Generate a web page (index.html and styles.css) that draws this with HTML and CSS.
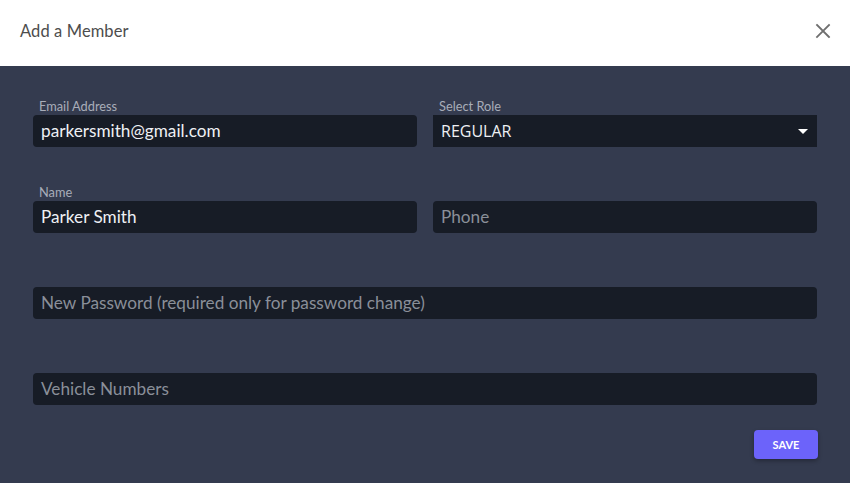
FILE: index.html
```html
<!DOCTYPE html>
<html>
<head>
<meta charset="utf-8">
<link rel="stylesheet" href="styles.css">
</head>
<body>
<div class="modal">
  <header class="modal-header">
    <h1 class="title">Add a Member</h1>
    <button class="close" aria-label="Close">
      <svg width="16" height="16" viewBox="0 0 16 16"><path d="M2 2L14 14M14 2L2 14" stroke="#6f6f6f" stroke-width="1.8" stroke-linecap="square"/></svg>
    </button>
  </header>
  <main class="modal-body">
    <div class="grid">
      <div class="field">
        <label class="label">Email Address</label>
        <div class="input">parkersmith@gmail.com</div>
      </div>
      <div class="field">
        <label class="label">Select Role</label>
        <div class="input select"><span class="select-text">REGULAR</span><span class="caret"></span></div>
      </div>
      <div class="field">
        <label class="label">Name</label>
        <div class="input">Parker Smith</div>
      </div>
      <div class="field">
        <label class="label"></label>
        <div class="input placeholder">Phone</div>
      </div>
      <div class="field full">
        <label class="label"></label>
        <div class="input placeholder">New Password (required only for password change)</div>
      </div>
      <div class="field full">
        <label class="label"></label>
        <div class="input placeholder">Vehicle Numbers</div>
      </div>
    </div>
    <div class="actions">
      <button class="save">SAVE</button>
    </div>
  </main>
</div>
</body>
</html>
```

FILE: styles.css
```css
* { box-sizing: border-box; }
html, body { margin: 0; padding: 0; }
body {
  width: 850px;
  height: 483px;
  overflow: hidden;
  font-family: "Lato", "Noto Sans", sans-serif;
  background: #343b4f;
}
.modal { display: flex; flex-direction: column; height: 483px; }
.modal-header {
  height: 66px;
  background: #ffffff;
  display: flex;
  align-items: center;
  justify-content: space-between;
  padding: 0 19px 4px 20px;
}
.title {
  margin: 0;
  font-size: 16.5px;
  font-weight: 400;
  color: #4d4d4d;
  letter-spacing: 0.1px;
}
.close {
  border: 0;
  background: transparent;
  padding: 0;
  width: 16px;
  height: 16px;
  display: flex;
}
.modal-body {
  flex: 1;
  background: #343b4f;
  padding: 34px 33px 0 33px;
}
.grid {
  display: grid;
  grid-template-columns: 384px 384px;
  column-gap: 16px;
  row-gap: 39px;
}
.field { display: flex; flex-direction: column; }
.full { grid-column: 1 / span 2; }
.label {
  height: 15px;
  font-size: 12.8px;
  line-height: 13px;
  color: #a8adb9;
  padding-left: 6px;
}
.input {
  height: 32px;
  background: #171c26;
  border-radius: 4px;
  color: #eef0f4;
  font-size: 17.2px;
  line-height: 32px;
  padding: 0 8px;
}
.placeholder { color: #8a8f99; }
.select {
  border-radius: 0;
  display: flex;
  align-items: center;
  justify-content: space-between;
  font-family: "Open Sans", "Noto Sans", sans-serif;
  font-size: 16px;
  padding-right: 9px;
}
.caret {
  width: 0; height: 0;
  border-left: 5px solid transparent;
  border-right: 5px solid transparent;
  border-top: 5px solid #ffffff;
}
.actions {
  display: flex;
  justify-content: flex-end;
  margin-top: 25px;
}
.save {
  width: 64px;
  height: 29px;
  border: 0;
  border-radius: 4px;
  background: #6c63fa;
  color: #ffffff;
  font-family: "Lato", sans-serif;
  font-weight: 700;
  font-size: 11px;
  box-shadow: 0 2px 4px rgba(0,0,0,0.3);
  margin-right: -1px;
}
```
